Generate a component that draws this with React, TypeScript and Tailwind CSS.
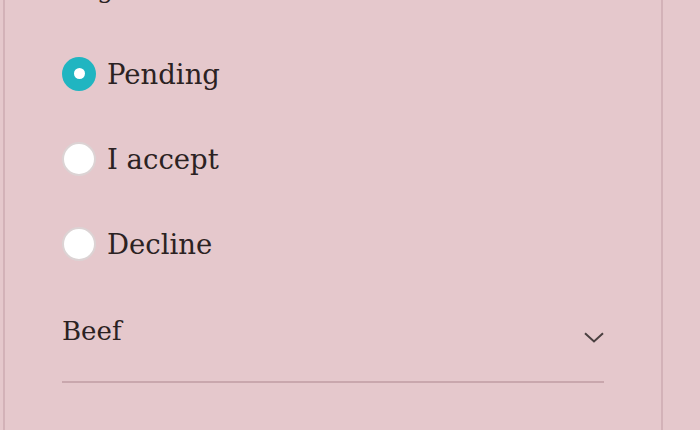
import React, { useState } from "react";

const options = ["Pending", "I accept", "Decline"];

export default function App() {
  const [value, setValue] = useState("Pending");

  return (
    <div className="w-[700px] h-[430px] overflow-hidden bg-[#e5c8cc] text-[#2b2222] font-['DejaVu_Serif',serif]">
      <div className="ml-[3px] w-[660px] h-full flex flex-col border-x-2 border-[#d3b2b8] pl-[57px] pr-[57px]">
        <div className="-mt-[29px] h-[36px] text-[26px] leading-[36px]">Registration</div>
        <div className="mt-[24px] flex flex-col">
          {options.map((o) => {
            const checked = value === o;
            return (
              <label key={o} className="h-[85px] flex items-center gap-[11px] cursor-pointer">
                <span
                  onClick={() => setValue(o)}
                  className={
                    checked
                      ? "w-[34px] h-[34px] rounded-full bg-[#20b5c1] flex items-center justify-center"
                      : "w-[34px] h-[34px] rounded-full bg-white border-2 border-[#dcd3d4]"
                  }
                >
                  {checked && <span className="w-[11px] h-[11px] rounded-full bg-white" />}
                </span>
                <span className="text-[27.5px] leading-[36px]">{o}</span>
              </label>
            );
          })}
        </div>
        <div className="mt-[27px] border-b-2 border-[#c9a7ad] pb-[32px] flex items-center justify-between">
          <span className="text-[26px] leading-[36px]">Beef</span>
          <svg width="20" height="11" viewBox="0 0 20 11" className="mt-[12px]">
            <path d="M1 1.2 L10 9.5 L19 1.2" fill="none" stroke="#4a4040" strokeWidth="2" />
          </svg>
        </div>
      </div>
    </div>
  );
}
